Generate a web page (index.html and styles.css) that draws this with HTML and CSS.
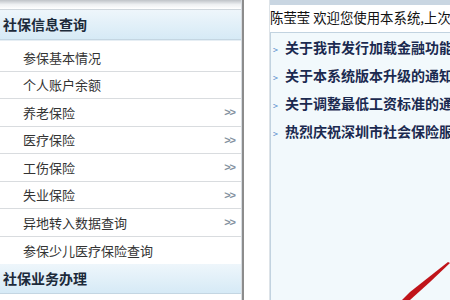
FILE: index.html
```html
<!DOCTYPE html>
<html>
<head>
    <title>社保信息查询</title>
    <link rel="stylesheet" href="styles.css">
</head>
<body>
  <div class="page">
    <div class="side">
      <div class="side-top"></div>
      <div class="menu-head">社保信息查询</div>
      <ul class="menu">
        <li>参保基本情况</li>
        <li>个人账户余额</li>
        <li>养老保险<span class="more">&gt;&gt;</span></li>
        <li>医疗保险<span class="more">&gt;&gt;</span></li>
        <li>工伤保险<span class="more">&gt;&gt;</span></li>
        <li>失业保险<span class="more">&gt;&gt;</span></li>
        <li>异地转入数据查询<span class="more">&gt;&gt;</span></li>
        <li>参保少儿医疗保险查询</li>
      </ul>
      <div class="menu-head">社保业务办理</div>
    </div>
    <div class="divider"></div>
    <div class="gap"></div>
    <div class="main">
      <div class="main-top"></div>
      <p class="welcome">陈莹莹 欢迎您使用本系统,上次</p>
      <div class="news">
        <ul>
          <li><span class="dot">&gt;</span>关于我市发行加载金融功能</li>
          <li><span class="dot">&gt;</span>关于本系统版本升级的通知</li>
          <li><span class="dot">&gt;</span>关于调整最低工资标准的通</li>
          <li><span class="dot">&gt;</span>热烈庆祝深圳市社会保险服</li>
        </ul>
      </div>
    </div>
  </div>
  <svg class="arrow" width="60" height="40" viewBox="0 0 60 40">
    <path d="M60 3 L58 2 L20 32 L12 40 L20 40 L40 22 Z" fill="#c0141a"/>
  </svg>
</body>
</html>
```

FILE: styles.css
```css
body{
    margin: 0px;
    padding: 0px;
    font-family: "Noto Sans CJK SC", "Liberation Sans", sans-serif;
    background: #fff;
    overflow: hidden;
}

.page{
    display: flex;
    height: 300px;
}

.side{
    width: 242px;
    flex: none;
    border-right: solid 1px #d8dde2;
    box-sizing: border-box;
}

.side-top{
    height: 9px;
    background: linear-gradient(#bfc3c8, #eef0f2 50%, #fff);
    border-bottom: solid 1px #cfd6dc;
}

.menu-head{
    height: 30px;
    line-height: 29px;
    padding-left: 3px;
    font-size: 14px;
    font-weight: bold;
    color: #1c2a3a;
    background: linear-gradient(#eef6fb, #d6eaf6);
    border-bottom: solid 1px #c4d6e2;
    box-sizing: border-box;
}

.menu{
    margin: 0px;
    padding: 3px 0 0 0;
    list-style-type: none;
    border-top: solid 1px #e6eef4;
}

.menu li{
    display: flex;
    justify-content: space-between;
    align-items: center;
    height: 27.5px;
    padding: 0 6px 0 23px;
    font-size: 13px;
    color: #333;
    border-bottom: solid 1px #d9dcdf;
    box-sizing: border-box;
}

.menu li:last-child{
    border-bottom: none;
}

.more{
    font-family: "Liberation Sans", sans-serif;
    font-size: 11px;
    font-weight: bold;
    color: #8492a0;
    letter-spacing: -1px;
}

.divider{
    width: 2px;
    flex: none;
    background: #8c8c8c;
}

.gap{
    width: 25px;
    flex: none;
    background: #fff;
    border-right: solid 1px #dde3e8;
}

.main{
    flex: 1;
    min-width: 0;
    overflow: hidden;
    background: #fff;
}

.main-top{
    height: 5px;
    background: #c9d6e2;
}

.welcome{
    margin: 0px;
    height: 27px;
    line-height: 24px;
    font-size: 13.4px;
    color: #111;
    white-space: nowrap;
}

.news{
    height: 300px;
    background: #f2f9fc;
    border-top: solid 1px #c2d3e0;
    border-left: solid 1px #c2d3e0;
}

.news ul{
    margin: 0px;
    padding: 0px;
    list-style-type: none;
}

.news li{
    height: 28px;
    line-height: 28px;
    font-size: 14px;
    font-weight: bold;
    color: #1b2a50;
    white-space: nowrap;
}

.dot{
    display: inline-block;
    width: 12px;
    padding-left: 2px;
    font-size: 9px;
    font-weight: normal;
    color: #4a86c8;
}

.arrow{
    position: absolute;
    left: 390px;
    top: 260px;
}
```
